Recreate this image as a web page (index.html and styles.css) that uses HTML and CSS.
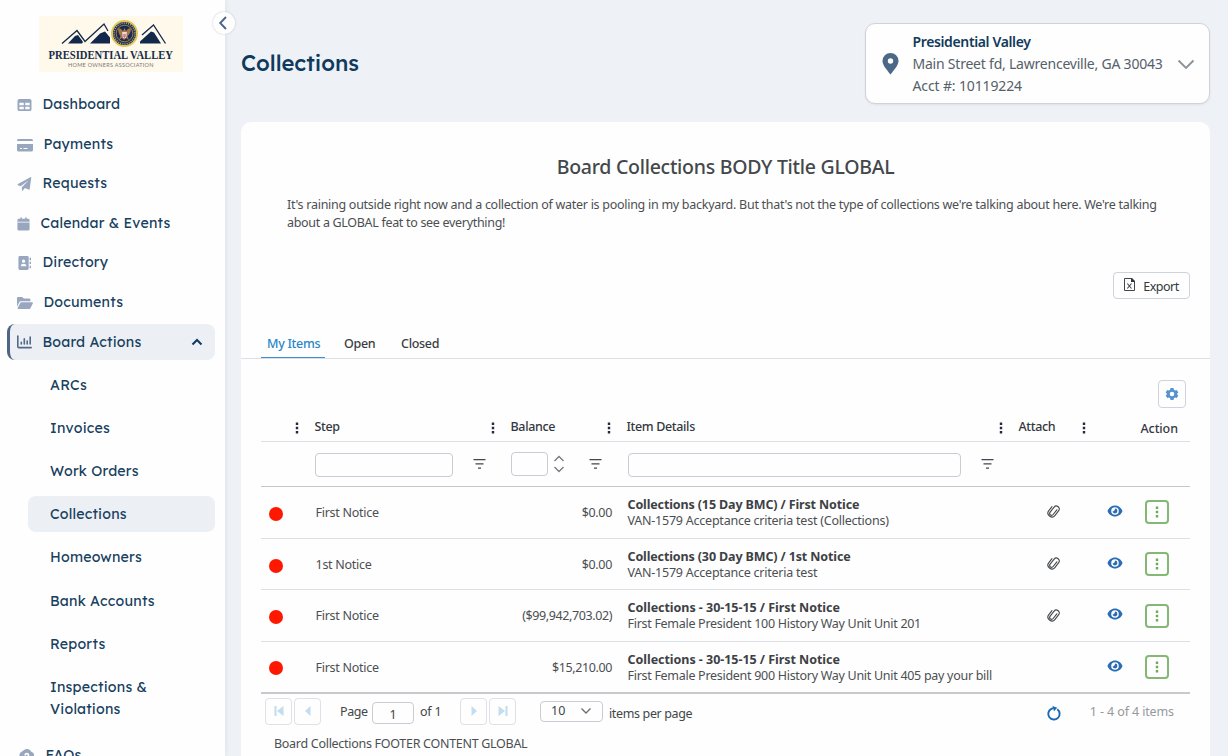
FILE: index.html
```html
<!DOCTYPE html>
<html lang="en">
<head>
<meta charset="utf-8">
<title>Collections</title>
<link rel="stylesheet" href="styles.css">
</head>
<body>
<svg class="defs" aria-hidden="true">
  <symbol id="i-table" viewBox="0 0 15 15"><path fill-rule="evenodd" d="M2 1h11a2 2 0 0 1 2 2v9a2 2 0 0 1-2 2H2a2 2 0 0 1-2-2V3a2 2 0 0 1 2-2zM2 5v2.700h4.700V5zM8.300 5v2.700H13V5zM2 9.300V12h4.700V9.300zM8.300 9.300V12H13V9.300z"/></symbol>
  <symbol id="i-card" viewBox="0 0 16 14"><path fill-rule="evenodd" d="M1.500 1h13A1.500 1.500 0 0 1 16 2.500V3H0v-.5A1.500 1.500 0 0 1 1.500 1zM0 6h16v6a1.600 1.600 0 0 1-1.600 1.500H1.600A1.600 1.600 0 0 1 0 12zM3 10v1h2v-1zM6.500 10v1h4v-1z"/></symbol>
  <symbol id="i-plane" viewBox="0 0 15 15"><path d="M14.800.4 13 13a.8.8 0 0 1-1.100.5L7.800 11.800l-2 2.700c-.4.500-1.100.2-1.100-.4V11L12 3.400 3.300 10 .5 8.800c-.6-.3-.6-1 0-1.300L13.800.2c.5-.3 1 0 1 .2z"/></symbol>
  <symbol id="i-cal" viewBox="0 0 13 15"><path d="M3 .5h1.700V2h3.600V.5H10V2h1.500A1.500 1.500 0 0 1 13 3.500V5H0V3.500A1.500 1.500 0 0 1 1.500 2H3zM0 6h13v7a1.500 1.500 0 0 1-1.500 1.500h-10A1.500 1.500 0 0 1 0 13z"/></symbol>
  <symbol id="i-book" viewBox="0 0 15 15"><path fill-rule="evenodd" d="M2.500 0h8A1.500 1.500 0 0 1 12 1.500v12a1.500 1.500 0 0 1-1.500 1.500h-8A1.500 1.500 0 0 1 1 13.500v-12A1.500 1.500 0 0 1 2.500 0zM6.500 3.700a1.800 1.800 0 1 0 0 3.600 1.800 1.800 0 0 0 0-3.600zM3.500 11h6c0-2-1.200-2.800-3-2.800s-3 .8-3 2.800zM13 2h1.500v2.500H13zM13 6.200h1.500v2.500H13zM13 10.500h1.500V13H13z"/></symbol>
  <symbol id="i-folder" viewBox="0 0 16 14"><path d="M0 11V2.300C0 1.500.6 1 1.300 1h3.800l1.800 1.600h5.200c.7 0 1.300.6 1.300 1.400v1.200H4.200c-.9 0-1.700.5-2.100 1.200zM.6 12.200 3.200 7c.2-.5.7-.8 1.200-.8h10.800c.6 0 .9.600.7 1.100l-2.500 5c-.2.400-.6.700-1.200.7H1.100c-.5 0-.7-.400-.5-.8z"/></symbol>
  <symbol id="i-chart" viewBox="0 0 15 14"><g fill="none" stroke="currentColor" stroke-linecap="round"><path stroke-width="1.600" d="M.8 1v10.400c0 .8.500 1.200 1.200 1.200h12.200"/><path stroke-width="1.600" d="M4.300 7.300V9M7.300 3.800V9M10.200 6V9M13.200 2V9"/></g></symbol>
  <symbol id="i-dots" viewBox="0 0 4 12"><path d="M.8.500h2.400v2.400H.8zM.8 4.800h2.400v2.400H.8zM.8 9.100h2.400v2.400H.8z"/></symbol>
  <symbol id="i-filter" viewBox="0 0 13 12"><path d="M.5 1h12v1.300H.5zM2.500 5.300h8v1.300h-8zM5 9.500h3v1.300H5z"/></symbol>
  <symbol id="i-clip" viewBox="0 0 14 16"><path transform="rotate(38 7 8)" fill="none" stroke="currentColor" stroke-width="1.100" stroke-linecap="round" d="M8.900 5v6c0 2.600-3.800 2.600-3.800 0V4.500c0-3.600 5.800-3.600 5.800 0v6.300c0 4.800-7.800 4.800-7.800 0V5.500"/></symbol>
  <symbol id="i-eye" viewBox="0 0 16 12"><path fill-rule="evenodd" d="M8 .5c3.500 0 6.300 2.300 7.500 5.500-1.200 3.200-4 5.500-7.500 5.500S1.700 9.200.5 6C1.700 2.800 4.500.5 8 .5zM8 2.200a3.800 3.800 0 1 0 0 7.600 3.800 3.800 0 0 0 0-7.600z"/><path d="M8 3.600A2.400 2.400 0 1 1 5.600 6c.8.5 2.400 0 2.400-2.400z"/></symbol>
  <symbol id="i-first" viewBox="0 0 10 12"><path d="M.5 1h2v10h-2zM9.500 1v10L3 6z"/></symbol>
  <symbol id="i-prev" viewBox="0 0 10 12"><path d="M7.500 1v10L2 6z"/></symbol>
</svg>
<div class="app">
  <aside class="side">
    <div class="brand">
      <svg class="logo" viewBox="0 0 144 56" width="144" height="56">
        <rect width="144" height="56" fill="#fef9ea"/>
        <g fill="none" stroke="#12294c" stroke-width="1.300"><path d="M23 27.500 38 14.500 46 25.500 65 8l4 7"/><path d="M103 19 114.500 9 126.500 27.500"/></g>
        <g fill="#12294c"><path d="M29 27.500 36 20l3-1 5 7-1 1.500zM51 27.500l10-10 5-2 5 6v6zM101 27.500v-2l11-10 3 1 7 11z"/></g>
        <circle cx="85.500" cy="17.500" r="12.500" fill="#25334d" stroke="#e3c65a" stroke-width="2"/>
        <circle cx="85.500" cy="17.500" r="10.500" fill="none" stroke="#b9b294" stroke-width="1.400" stroke-dasharray="1 1.200"/>
        <circle cx="85.500" cy="17.500" r="8.300" fill="#182c51" stroke="#c6a04b" stroke-width=".7"/>
        <path d="M79 12q3 0 5 3l1.500-3 1.500 3q2-3 5-3-.2 6-3.500 8l1.500 4-3-2-2 2-2-2-3 2 1.500-4Q79.300 18 79 12z" fill="#a5754b"/>
        <path d="M83.200 16h4.600v4q-.5 2-2.300 2.500-1.800-.5-2.300-2.500z" fill="#e8dcd6"/><path d="M84.200 18v3M85.500 18v4M86.800 18v3" stroke="#bd3a40" stroke-width=".6"/>
        <text class="logo-name" x="9.500" y="43.200" textLength="124.500" lengthAdjust="spacingAndGlyphs">PRESIDENTIAL VALLEY</text>
        <text class="logo-sub" x="29" y="51" textLength="85.500">HOME OWNERS ASSOCIATION</text>
      </svg>
    </div>
    <nav class="nav">
      <a class="item"><svg class="w14"><use href="#i-table"/></svg><span>Dashboard</span></a>
      <a class="item"><svg class="w16"><use href="#i-card"/></svg><span>Payments</span></a>
      <a class="item"><svg class="w14"><use href="#i-plane"/></svg><span>Requests</span></a>
      <a class="item"><svg class="w13"><use href="#i-cal"/></svg><span>Calendar &amp; Events</span></a>
      <a class="item"><svg class="w14"><use href="#i-book"/></svg><span>Directory</span></a>
      <a class="item"><svg class="w16"><use href="#i-folder"/></svg><span>Documents</span></a>
      <a class="item open"><svg class="w14"><use href="#i-chart"/></svg><span>Board Actions</span>
        <svg class="caret" viewBox="0 0 12 8"><path d="M1.500 6.500 6 2l4.500 4.500" fill="none" stroke="#123a5f" stroke-width="2"/></svg></a>
      <div class="sub">
        <a>ARCs</a><a>Invoices</a><a>Work Orders</a><a class="on">Collections</a><a>Homeowners</a><a>Bank Accounts</a><a>Reports</a><a class="two">Inspections &amp;<br>Violations</a>
      </div>
      <a class="item faq"><svg class="w16" viewBox="0 0 16 14"><path fill-rule="evenodd" d="M5 1q3-2 6 0l1 1.500 2.500 1.500 1 4-1 3-3 3H4L1 11 0 8l1-4zM5.500 5v1.500H7Q7 5.500 8.200 5.500q1 .5 0 1.500l-1 1.500v1h1.500q0-1 1.200-2Q11 5 9 4T5.500 5z"/></svg><span>FAQs</span></a>
    </nav>
    <div class="collapse"><svg viewBox="0 0 10 14" width="10" height="14"><path d="M8 1 2.200 7 8 13" fill="none" stroke="#4c6787" stroke-width="1.900"/></svg></div>
  </aside>
  <main class="main">
    <header class="top">
      <h1>Collections</h1>
      <div class="account">
        <svg class="pin" viewBox="0 0 16 22"><path fill-rule="evenodd" d="M8 0a8 8 0 0 1 8 8c0 4-4 8.500-8 13.500C4 16.500 0 12 0 8a8 8 0 0 1 8-8zM8 5.300a2.700 2.700 0 1 0 0 5.400 2.700 2.700 0 0 0 0-5.400z"/></svg>
        <div class="acct"><b>Presidential Valley</b><span class="l2">Main Street fd, Lawrenceville, GA 30043</span><span class="l3">Acct #: 10119224</span></div>
        <svg class="down" viewBox="0 0 18 11"><path d="M1.500 1.500 9 9l7.500-7.500" fill="none" stroke="#8d949b" stroke-width="1.900"/></svg>
      </div>
    </header>
    <section class="card">
      <h2><span>Board Collections BODY Title GLOBAL</span></h2>
      <p class="intro"><span>It's raining outside right now and a collection of water is pooling in my backyard. But that's not the type of collections we're talking about here. We're talking</span><br><span class="in2">about a GLOBAL feat to see everything!</span></p>
      <div class="tools"><button class="btn export"><svg viewBox="0 0 11 13" width="11" height="13"><path d="M.5.500h7L10.500 3.500v9H.5z" fill="none" stroke="#41464b"/><path d="M7 0h1l3 3v1H7z"/><path d="M3.300 5.500 7.500 10.500M7.500 5.500 3.300 10.500" fill="none" stroke="#41464b" stroke-width="1.100"/></svg><span>Export</span></button></div>
      <div class="tabs"><a class="tab sel"><span>My Items</span></a><a class="tab t2"><span>Open</span></a><a class="tab t3"><span>Closed</span></a></div>
      <div class="cfg"><button class="btn gear"><svg viewBox="0 0 14 14" width="14" height="14"><path fill-rule="evenodd" d="M5.500 1h3l.4 1.700 1.200.7 1.700-.5 1.500 2.600-1.300 1.200v.6l1.300 1.200-1.500 2.600-1.700-.5-1.200.7-.4 1.700h-3l-.4-1.700-1.200-.7-1.700.5L.7 8.500 2 7.300v-.6L.7 5.500l1.500-2.600 1.700.5 1.200-.7zM7 4.700a2.300 2.300 0 1 0 0 4.600 2.300 2.300 0 0 0 0-4.600z"/></svg></button></div>
      <div class="grid">
        <div class="row head">
          <div class="h"><svg class="dots"><use href="#i-dots"/></svg></div>
          <div class="h"><span>Step</span><svg class="dots"><use href="#i-dots"/></svg></div>
          <div class="h"><span>Balance</span><svg class="dots"><use href="#i-dots"/></svg></div>
          <div class="h"><span>Item Details</span><svg class="dots"><use href="#i-dots"/></svg></div>
          <div class="h"><span>Attach</span><svg class="dots"><use href="#i-dots"/></svg></div>
          <div class="h"></div>
          <div class="h act"><span>Action</span></div>
        </div>
        <div class="row filters">
          <div></div>
          <div class="f"><i class="box grow"></i><svg class="fil"><use href="#i-filter"/></svg></div>
          <div class="f"><i class="box num"></i><svg class="spin" viewBox="0 0 12 18"><path d="M1.500 6 6 1.500 10.500 6M1.500 12 6 16.500 10.500 12" fill="none" stroke="#77787c" stroke-width="1.300"/></svg><svg class="fil"><use href="#i-filter"/></svg></div>
          <div class="f wide"><i class="box grow"></i><svg class="fil"><use href="#i-filter"/></svg></div>
          <div></div><div></div><div></div>
        </div>
        <div class="row data">
          <div><i class="dot"></i></div><div class="step">First Notice</div><div class="amt">$0.00</div>
          <div class="detail"><b class="d1">Collections (15 Day BMC) / First Notice</b><span class="e1">VAN-1579 Acceptance criteria test (Collections)</span></div>
          <div class="att"><svg class="clip"><use href="#i-clip"/></svg></div><div class="view"><svg class="eye"><use href="#i-eye"/></svg></div><div class="more"><i><svg><use href="#i-dots"/></svg></i></div>
        </div>
        <div class="row data">
          <div><i class="dot"></i></div><div class="step">1st Notice</div><div class="amt">$0.00</div>
          <div class="detail"><b class="d1">Collections (30 Day BMC) / 1st Notice</b><span class="e1">VAN-1579 Acceptance criteria test</span></div>
          <div class="att"><svg class="clip"><use href="#i-clip"/></svg></div><div class="view"><svg class="eye"><use href="#i-eye"/></svg></div><div class="more"><i><svg><use href="#i-dots"/></svg></i></div>
        </div>
        <div class="row data">
          <div><i class="dot"></i></div><div class="step">First Notice</div><div class="amt wideamt">($99,942,703.02)</div>
          <div class="detail"><b class="d3">Collections - 30-15-15 / First Notice</b><span class="e3">First Female President 100 History Way Unit Unit 201</span></div>
          <div class="att"><svg class="clip"><use href="#i-clip"/></svg></div><div class="view"><svg class="eye"><use href="#i-eye"/></svg></div><div class="more"><i><svg><use href="#i-dots"/></svg></i></div>
        </div>
        <div class="row data last">
          <div><i class="dot"></i></div><div class="step">First Notice</div><div class="amt wideamt">$15,210.00</div>
          <div class="detail"><b class="d3">Collections - 30-15-15 / First Notice</b><span class="e3">First Female President 900 History Way Unit Unit 405 pay your bill</span></div>
          <div class="att"></div><div class="view"><svg class="eye"><use href="#i-eye"/></svg></div><div class="more"><i><svg><use href="#i-dots"/></svg></i></div>
        </div>
      </div>
      <div class="pager">
        <i class="pg"><svg><use href="#i-first"/></svg></i><i class="pg"><svg><use href="#i-prev"/></svg></i>
        <span class="page">Page</span><span class="pnum">1</span><span class="of">of 1</span>
        <i class="pg flip"><svg><use href="#i-prev"/></svg></i><i class="pg flip"><svg><use href="#i-first"/></svg></i>
        <span class="size"><span>10</span><svg viewBox="0 0 12 8" width="12" height="8"><path d="M1.500 1.500 6 6l4.500-4.500" fill="none" stroke="#6c7075" stroke-width="1.400"/></svg></span><span class="per">items per page</span>
        <svg class="reload" viewBox="0 0 14 14"><path d="M10.500 3A5.300 5.300 0 1 1 5 2.600L7 2" fill="none" stroke="#1a6bb3" stroke-width="1.800"/><path d="M6 0 10.500 1.700 7.500 4.800z" fill="#1a6bb3"/></svg>
        <span class="count">1 - 4 of 4 items</span>
      </div>
      <div class="foot">Board Collections FOOTER CONTENT GLOBAL</div>
    </section>
  </main>
</div>
</body>
</html>
```
FILE: styles.css
```css
* { box-sizing: border-box; }
html, body { margin: 0; height: 756px; overflow: hidden; }
body { font: 12.5px/18px "Noto Sans", "Open Sans", sans-serif; color: #4c4f52; background: #eef1f5; }
.defs { position: absolute; width: 0; height: 0; }
svg { fill: currentColor; flex: none; }
i { font-style: normal; display: block; }
.app { display: flex; height: 756px; }

.side { position: relative; width: 225px; flex: none; background: #fefefe; box-shadow: 1px 0 5px #dfe4ea; }
.brand { padding: 16px 0 0 39px; height: 86px; }
.logo { display: block; }
.logo-name { font: bold 12.500px "Liberation Serif", serif; fill: #172c4c; }
.logo-sub { font: 5.500px Lato, sans-serif; fill: #76777b; }
.collapse { position: absolute; left: 213px; top: 12px; width: 22px; height: 22px; border-radius: 50%; background: #fff; box-shadow: 0 0 2px #b9c0c9; display: flex; align-items: center; justify-content: center; padding-right: 2px; }
.nav { height: 670px; overflow: hidden; font-family: Lexend, Inter, sans-serif; font-weight: 400; font-size: 14.200px; letter-spacing: .2px; color: #17405f; }
.item { display: flex; align-items: center; height: 36px; margin: 0 10px 3.600px 7px; padding: 0 12px 0 10px; }
.item > svg:first-child { color: #98a7be; height: 14px; margin: 2px 10.500px 0 0; }
.w13 { width: 13px; } .w14 { width: 15px; } .w16 { width: 16px; }
.item.open { background: #eceff4; border-left: 3px solid #4e6585; border-radius: 8px; padding-left: 7px; margin-bottom: 7px; }
.item.open > svg:first-child { color: #526988; margin-top: 0; }
.caret { width: 12px; height: 8px; margin-left: auto; }
.sub { display: flex; flex-direction: column; gap: 7.200px; margin: 0 10px 10px 28px; }
.sub a { height: 36px; padding-left: 22px; line-height: 36px; border-radius: 8px; }
.sub .on { background: #eceff4; }
.sub .two { line-height: 22px; height: 58px; padding-top: 7px; }
.item.faq { padding-left: 12px; }

.main { flex: 1; padding: 23px 18px 0 16px; }
.top { display: flex; justify-content: space-between; height: 99px; }
h1 { margin: 24px 0 0; font: 500 22px/32px Lexend, Inter, sans-serif; color: #0f3a5e; }
.account { display: flex; align-items: center; width: 345px; height: 81px; border: 1px solid #cfd2d7; border-radius: 10px; background: #fefefe; padding: 0 14px 0 16px; box-shadow: 0 1px 2px #dde1e6; }
.pin { width: 17px; height: 22px; color: #4c6887; }
.acct { display: flex; flex-direction: column; margin-left: 13.500px; line-height: 22px; font-size: 14px; color: #566069; flex: 1; white-space: nowrap; }
.acct b { font-weight: 600; color: #123a5c; letter-spacing: -.37px; }
.l2 { letter-spacing: -.22px; }
.l3 { letter-spacing: -.13px; }
.down { width: 18px; height: 11px; margin-top: 2px; }

.card { height: 650px; background: #fefefe; border-radius: 10px 10px 0 0; padding-top: 32px; }
h2 { margin: 0; font-size: 19.500px; line-height: 26px; font-weight: 500; text-align: center; color: #44484b; letter-spacing: -.27px; }
.intro { margin: 16px 20px 0 46px; white-space: nowrap; letter-spacing: -.275px; }
.in2 { letter-spacing: -.31px; }
.tools { display: flex; justify-content: flex-end; padding: 40px 20px 0 0; }
.btn { display: flex; align-items: center; justify-content: center; background: #fefefe; border: 1px solid #cfd2dc; border-radius: 4px; font: inherit; color: #33383d; padding: 0; }
.export { width: 77px; height: 27px; gap: 8px; letter-spacing: -.5px; }
.export svg { margin-top: -2px; }
.export span { padding-top: 2px; }
.tabs { display: flex; height: 28px; margin-top: 32px; padding-left: 20px; border-bottom: 1px solid #dcdfe5; font-weight: 500; color: #3a3e42; letter-spacing: -.3px; white-space: nowrap; }
.tab { height: 27px; padding: 4px 6px 0; }
.sel { width: 64px; color: #2787c9; border-bottom: 1px solid #3f8fcd; }
.t2 { margin-left: 13px; width: 50px; } .t3 { margin-left: 7px; }
.cfg { display: flex; justify-content: flex-end; padding: 21px 24px 0 0; }
.gear { width: 28px; height: 28px; color: #5691d0; }
.grid { margin: 6px 20px 0; }
.row { display: grid; grid-template-columns: 46px 196px 116px 392px 83px 39px 57px; }
.head { height: 28px; border-bottom: 1px solid #dddee6; font-weight: 500; color: #34383e; letter-spacing: -.35px; }
.h { display: flex; justify-content: space-between; padding: 0 8.500px 0 7.500px; }
.h span { line-height: 26px; }
.h:first-child { justify-content: flex-end; }
.dots { width: 4px; height: 12px; margin-top: 8px; color: #252b3e; }
.h.act span { line-height: 30px; letter-spacing: -.1px; }
.filters { height: 45px; border-bottom: 1px solid #c4c7ca; }
.f { display: flex; align-items: center; padding: 0 17px 0 8px; }
.wide { padding-left: 9px; }
.box { height: 24px; border: 1px solid #c9ccd4; border-radius: 4px; }
.grow { flex: 1; margin: 1px 20px 0 0; }
.num { width: 37px; margin-right: 5px; }
.spin { width: 12px; height: 18px; margin-right: auto; }
.fil { width: 13px; height: 12px; color: #44464d; }
.data { height: 51.700px; border-bottom: 1px solid #dedfe4; align-items: center; }
.data.last { border-bottom: 2px solid #c7c9cc; }
.last .step, .last .amt, .last .detail, .last .view { margin-top: 2px; }
.dot { width: 14px; height: 14px; border-radius: 50%; background: #ff1800; margin: 3px 0 0 8px; }
.step { padding: 1px 0 0 8.500px; letter-spacing: -.27px; }
.amt { text-align: right; padding: 1px 7px 0 0; letter-spacing: -.33px; }
.wideamt { letter-spacing: -.4px; }
.detail { display: flex; flex-direction: column; line-height: 16px; padding: 1px 0 0 8.500px; white-space: nowrap; }
.detail b { color: #3d4145; }
.d1 { letter-spacing: -.13px; } .d3 { letter-spacing: -.04px; }
.e1 { letter-spacing: -.23px; } .e3 { letter-spacing: -.29px; }
.att { padding-left: 35px; height: 18px; }
.clip { width: 15px; height: 16px; color: #43474a; }
.view { padding-left: 12.500px; height: 15px; }
.eye { width: 16px; height: 12px; color: #2b6cb5; display: block; }
.more { padding-left: 11.500px; }
.more i { width: 24px; height: 24px; border: 2px solid #85b874; border-radius: 4px; display: flex; align-items: center; justify-content: center; }
.more svg { width: 4px; height: 12px; color: #6eab55; }
.pager { display: flex; height: 39px; padding: 4px 36px 0 24px; color: #424649; }
.pager > * { flex: none; }
.pg { width: 27px; height: 27px; border: 1px solid #dfe0e8; border-radius: 4px; margin-right: 2px; display: flex; align-items: center; justify-content: center; color: #c3dcee; }
.pg svg { width: 10px; height: 12px; }
.flip svg { transform: scaleX(-1); }
.page { width: 27px; margin: 5px 5px 0 17px; letter-spacing: -.4px; }
.pnum { width: 42px; height: 22px; margin: 4px 6px 0 0; border: 1px solid #c9ccd4; border-radius: 4px; text-align: center; line-height: 24px; }
.of { width: 21px; margin: 5px 19px 0 0; white-space: nowrap; letter-spacing: -.2px; }
.size { width: 63px; height: 21px; margin: 3px 6px 0 22px; border: 1px solid #c9ccd4; border-radius: 4px; display: flex; align-items: center; justify-content: space-between; padding: 0 10px; }
.per { margin-top: 7px; letter-spacing: -.36px; }
.reload { width: 15px; height: 15px; margin: 8px 29px 0 auto; }
.count { margin-top: 5px; color: #96999c; letter-spacing: -.12px; }
.foot { padding: 2px 0 0 33px; letter-spacing: -.29px; }
```
